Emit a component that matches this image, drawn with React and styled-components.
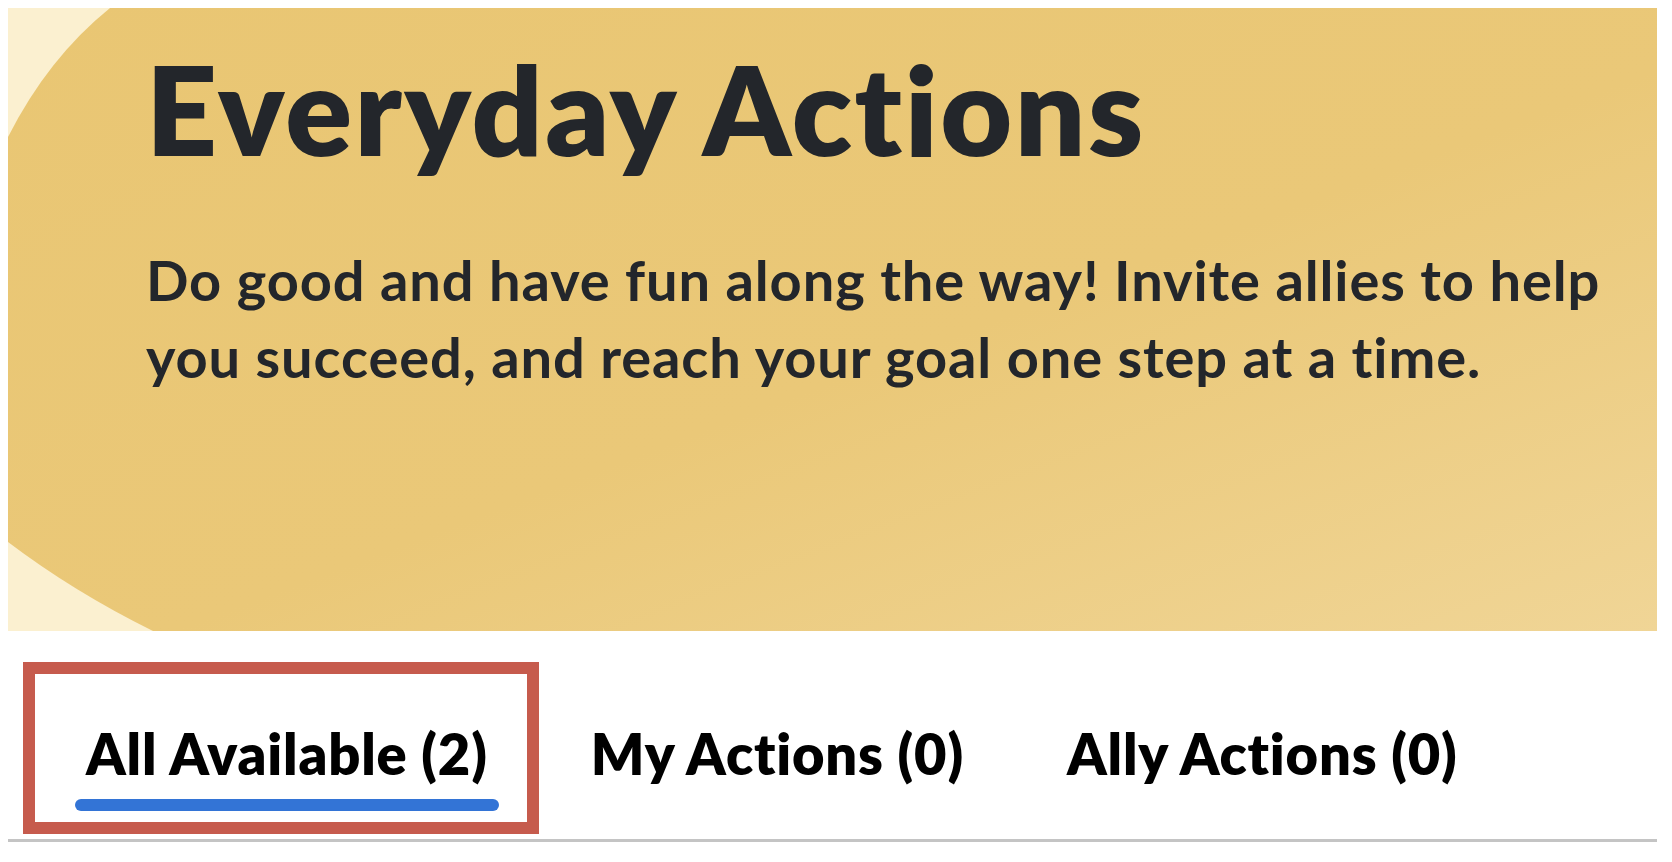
import React from 'react';
import styled, { createGlobalStyle } from 'styled-components';

const GlobalStyle = createGlobalStyle`
  html, body {
    margin: 0;
    padding: 0;
    background: #ffffff;
  }
  body {
    font-family: "Lato", "Noto Sans", sans-serif;
    -webkit-font-smoothing: antialiased;
  }
`;

const Page = styled.div`
  padding: 8px 15px 0 8px;
`;

const Banner = styled.section`
  position: relative;
  overflow: hidden;
  height: 623px;
  box-sizing: border-box;
  padding: 26px 30px 0 138px;
  background: #fbf0d0;
`;

const BannerArt = styled.svg`
  position: absolute;
  inset: 0;
  width: 100%;
  height: 100%;
`;

const BannerContent = styled.div`
  position: relative;
`;

const Title = styled.h1`
  margin: 0;
  font-size: 124px;
  line-height: 1.2;
  font-weight: 800;
  letter-spacing: 2.5px;
  color: #23262b;
`;

const Lead = styled.p`
  margin: 59px 0 0;
  max-width: 1490px;
  font-size: 56px;
  line-height: 76.7px;
  font-weight: 700;
  letter-spacing: 0.9px;
  color: #23262b;
`;

const TabBar = styled.nav`
  display: flex;
  gap: 81px;
  margin-top: 89px;
  padding: 0 0 28px 67px;
  border-bottom: 3px solid #c4c4c4;
`;

const Tab = styled.button`
  position: relative;
  display: flex;
  flex-direction: column;
  align-items: stretch;
  gap: 12px;
  padding: 0 11px;
  border: 0;
  background: none;
  font-family: inherit;
  font-size: 56px;
  line-height: 1.2;
  font-weight: 800;
  letter-spacing: 0.8px;
  color: #000000;
  cursor: pointer;

  &::after {
    content: "";
    height: 12px;
    margin: 0 -11px;
    border-radius: 6px;
    background: ${(p) => (p.$active ? '#3374d6' : 'transparent')};
  }
`;

const Highlight = styled.span`
  position: absolute;
  left: -52px;
  top: -58px;
  width: 516px;
  height: 172px;
  box-sizing: border-box;
  border: 12px solid #c65b4d;
  pointer-events: none;
`;

const tabs = [
  { label: 'All Available', count: 2, active: true },
  { label: 'My Actions', count: 0 },
  { label: 'Ally Actions', count: 0 },
];

export default function App() {
  return (
    <Page>
      <GlobalStyle />
      <Banner>
        <BannerArt viewBox="0 0 1649 623" preserveAspectRatio="none" aria-hidden="true">
          <defs>
            <linearGradient id="sun" x1="0" y1="0" x2="1" y2="1">
              <stop offset="0" stopColor="#e9c673" />
              <stop offset="0.55" stopColor="#eac878" />
              <stop offset="1" stopColor="#f0d596" />
            </linearGradient>
          </defs>
          <path d="M102 0 H1649 V623 H145 Q66 584 0 534 V129 Q40 50 102 0 Z" fill="url(#sun)" />
        </BannerArt>
        <BannerContent>
          <Title>Everyday Actions</Title>
          <Lead>
            Do good and have fun along the way! Invite allies to help you succeed, and reach your goal one step at a time.
          </Lead>
        </BannerContent>
      </Banner>
      <TabBar>
        {tabs.map((t) => (
          <Tab key={t.label} $active={t.active}>
            {t.active && <Highlight />}
            {t.label} ({t.count})
          </Tab>
        ))}
      </TabBar>
    </Page>
  );
}
